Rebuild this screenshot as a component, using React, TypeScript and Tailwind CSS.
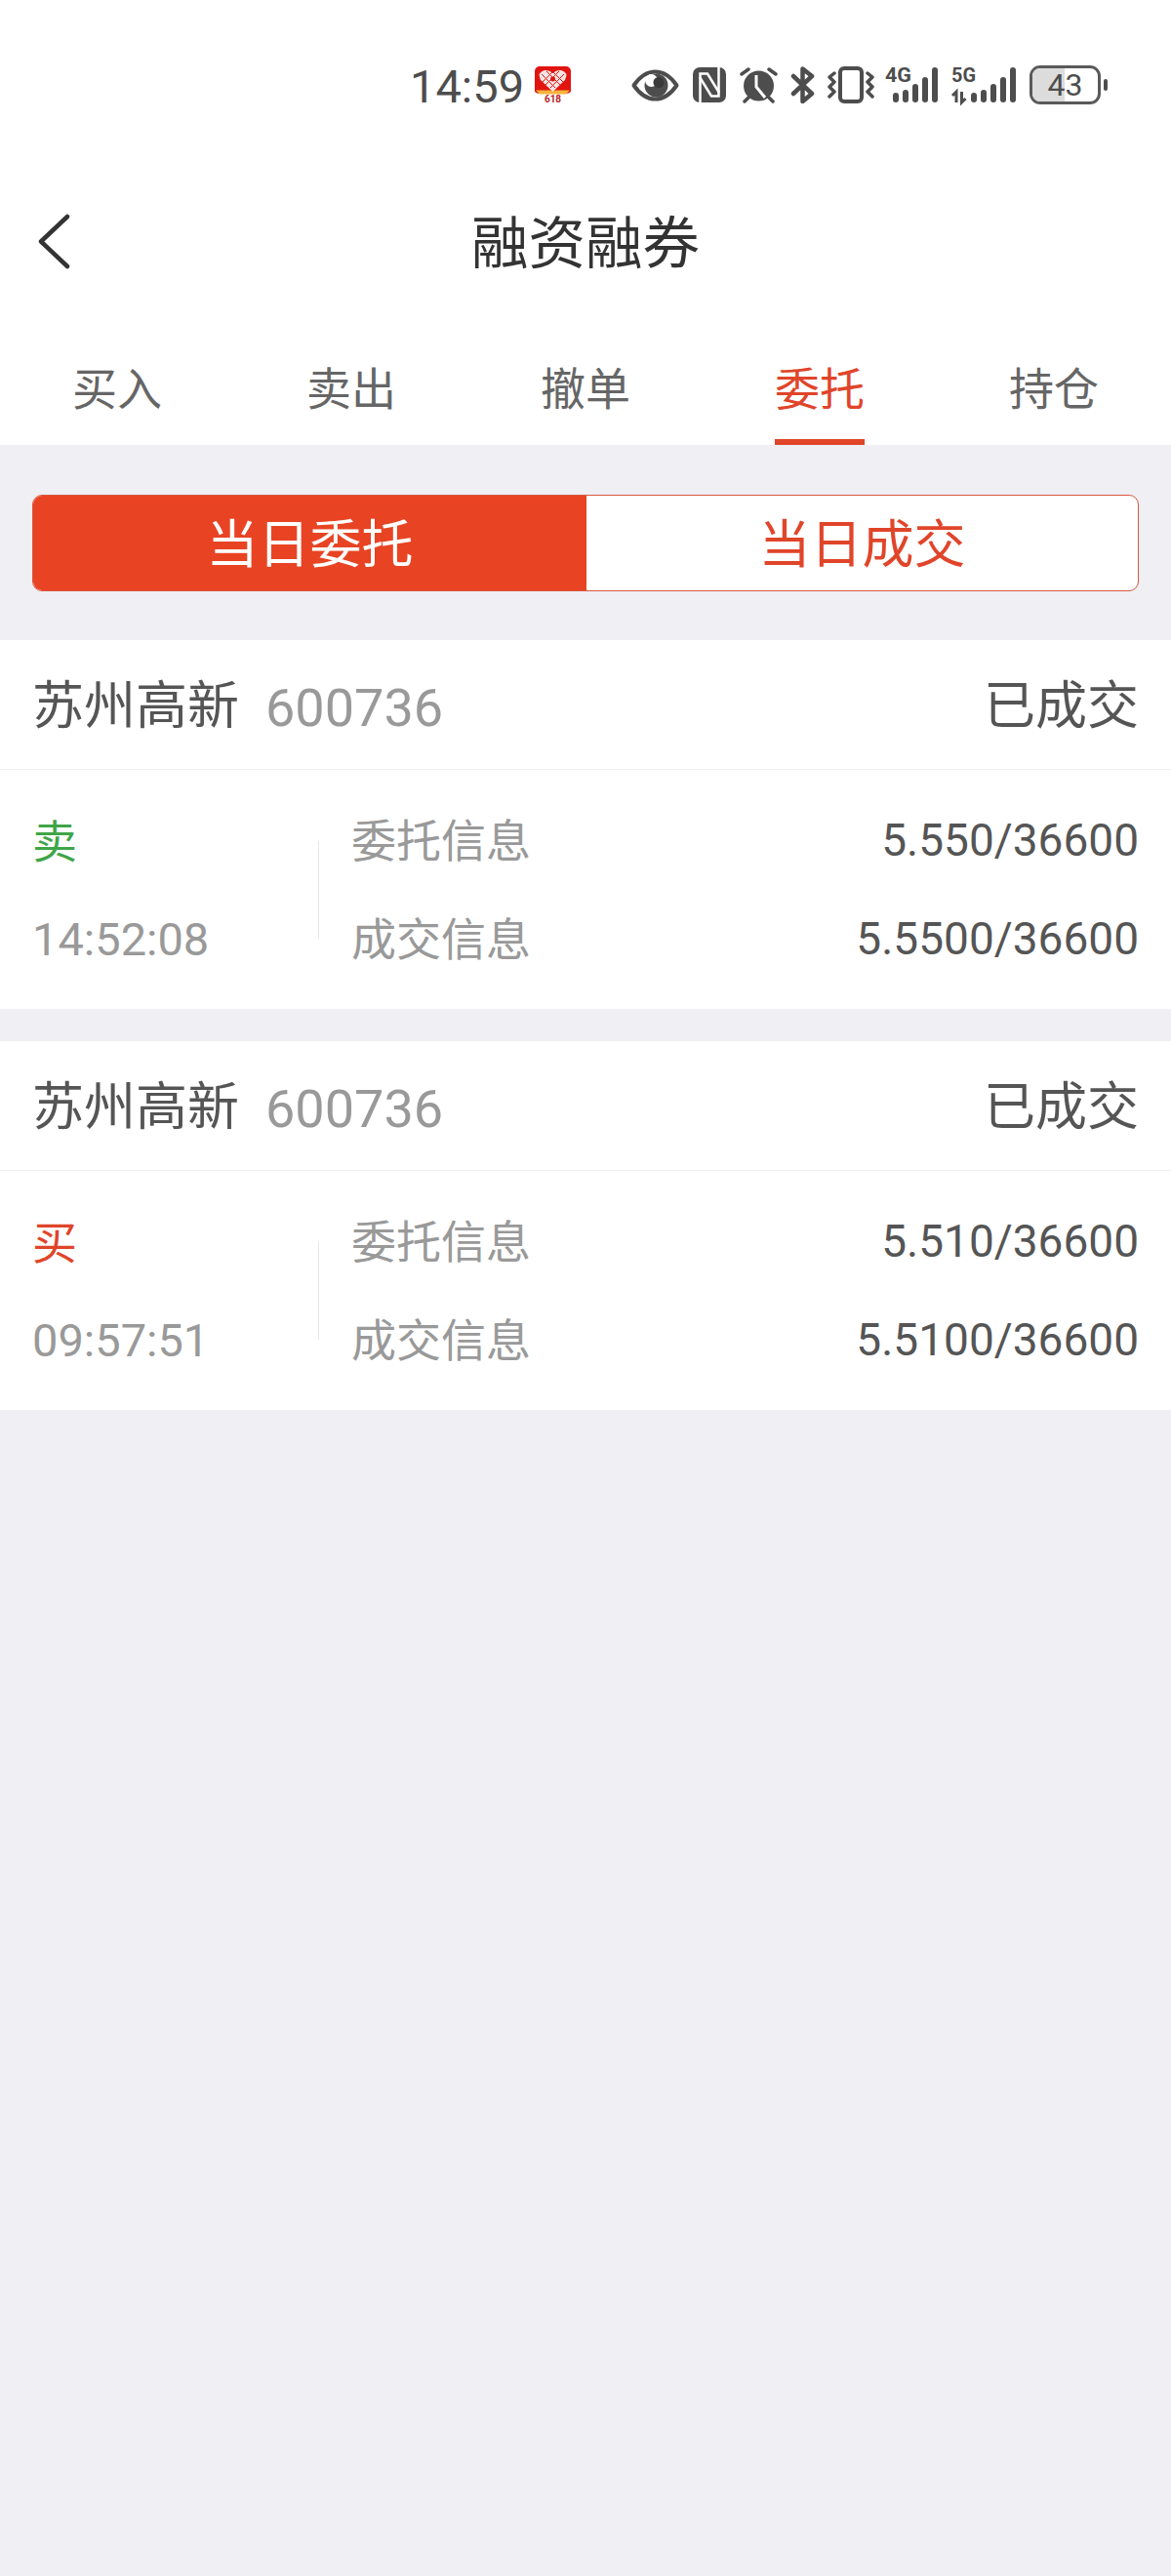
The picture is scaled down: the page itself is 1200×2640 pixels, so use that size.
const cjk = "font-['Noto_Sans_CJK_SC','Noto_Sans',sans-serif]";
const num = "font-['Roboto','Noto_Sans_CJK_SC',sans-serif]";

const tabs = ["买入", "卖出", "撤单", "委托", "持仓"];

const orders = [
  { side: "卖", sideClass: "text-[#3fa548]", time: "14:52:08", entrust: "5.550/36600", deal: "5.5500/36600" },
  { side: "买", sideClass: "text-[#e0452a]", time: "09:57:51", entrust: "5.510/36600", deal: "5.5100/36600" },
];

const AppBadge = () => (
  <svg width="39" height="42" viewBox="0 0 39 42" className="ml-[10px]">
    <path d="M6 2h27a5 5 0 0 1 5 5v21q-2 2-5 2H6q-3 0-5-2V7a5 5 0 0 1 5-5z" fill="#e1140f" />
    <path d="M2 26.500h35l-4 4H6z" fill="#f7b23c" />
    <path d="M19.500 28 L7 16 Q3 8 11 6 Q16 5.500 19.500 9 Q23 5.500 28 6 Q36 8 32 16 Z" fill="#f8e3e3" />
    <path d="M8 10l14 14M13 7l14 14M20 8l10 10M31 10L17 24M26 7L12 21M19 8L9 18" fill="none" stroke="#e1140f" strokeWidth="1" />
    <circle cx="19.500" cy="15" r="2.500" fill="#e1140f" />
    <text x="19.500" y="38.500" textAnchor="middle" fontSize="10" fontWeight="700" fill="#b5262c" fontFamily="Roboto">618</text>
  </svg>
);

const Eye = () => (
  <svg width="49" height="33" viewBox="0 0 49 33" className="ml-[61px]">
    <path d="M2.500 16.500C9 7 16 2.500 24.500 2.500S40 7 46.500 16.500C40 26 33 30.500 24.500 30.500S9 26 2.500 16.500z" fill="none" stroke="#4d4d4d" strokeWidth="4" strokeLinejoin="round" />
    <circle cx="25.500" cy="16.500" r="12" fill="#4d4d4d" />
    <circle cx="20.500" cy="11.500" r="6.500" fill="#fff" />
    <circle cx="28" cy="13.500" r="5.500" fill="#3a3a3a" />
  </svg>
);

const Nfc = () => (
  <svg width="34" height="36" viewBox="0 0 34 36" className="ml-[14px]">
    <rect x="0" y="0" width="34" height="36" rx="7" fill="#4d4d4d" />
    <path d="M7.500 36V6.500H15L27 26" fill="none" stroke="#fff" strokeWidth="2.500" />
    <path d="M26.500 0v29.500H19L7 10" fill="none" stroke="#fff" strokeWidth="2.500" />
  </svg>
);

const Alarm = () => (
  <svg width="39" height="38" viewBox="0 0 39 38" className="ml-[14px]">
    <circle cx="19.500" cy="20" r="15.500" fill="#4d4d4d" />
    <path d="M2 8l7-5M37 8l-7-5M9 32l-4 4M30 32l4 4" stroke="#4d4d4d" strokeWidth="3.500" strokeLinecap="round" />
    <path d="M17 9v12l9 11" fill="none" stroke="#fff" strokeWidth="3" />
  </svg>
);

const Bluetooth = () => (
  <svg width="25" height="38" viewBox="0 0 25 38" className="ml-[13px]">
    <path d="M3 10l19 18-9.500 8V2.500L22 10 3 28" fill="none" stroke="#4d4d4d" strokeWidth="4.500" strokeLinejoin="round" strokeLinecap="round" />
  </svg>
);

const Vibrate = () => (
  <svg width="48" height="38" viewBox="0 0 48 38" className="ml-[13px]">
    <rect x="13" y="2" width="22" height="34" rx="4" fill="none" stroke="#4d4d4d" strokeWidth="4" />
    <path d="M7 7L2 11l5 5-5 5 5 5-5 5" fill="none" stroke="#4d4d4d" strokeWidth="3.500" strokeLinejoin="round" strokeLinecap="round" />
    <path d="M41 7l5 4-5 5 5 5-5 5 5 5" fill="none" stroke="#4d4d4d" strokeWidth="3.500" strokeLinejoin="round" strokeLinecap="round" />
  </svg>
);

const barHeights = [10, 13, 19, 26, 36];

const Bars = ({ x }: { x: number }) => (
  <>
    {barHeights.map((height, i) => (
      <rect key={i} x={x + i * 10} y={37 - height} width="6" height={height} rx="3" fill="#4d4d4d" />
    ))}
  </>
);

// taller than the drawing so the 4G / 5G labels stay inside the svg box
const Signal4G = () => (
  <svg width="54" height="48" viewBox="0 -5 54 48" className="ml-[11px]">
    <text x="0" y="16" fontSize="21" fontWeight="700" fill="#4d4d4d" fontFamily="Roboto" textLength="27" lengthAdjust="spacingAndGlyphs">4G</text>
    <Bars x={8} />
  </svg>
);

const Signal5G = () => (
  <svg width="68" height="48" viewBox="0 -5 68 48" className="ml-[13px]">
    <text x="1" y="16" fontSize="21" fontWeight="700" fill="#4d4d4d" fontFamily="Roboto" textLength="25" lengthAdjust="spacingAndGlyphs">5G</text>
    <path d="M6 37V26L2 30M11.500 26v11l4-4" fill="none" stroke="#4d4d4d" strokeWidth="3" />
    <Bars x={21} />
  </svg>
);

const Battery = () => (
  <div className="ml-[13px] flex items-center">
    <div className="relative flex h-[40px] w-[73px] items-center justify-center overflow-hidden rounded-[11px] border-[3px] border-[#5a5a5a] bg-white">
      <div className="absolute left-0 top-0 h-full w-[33px] bg-[#dcdcdc]" />
      <span className={`relative text-[32px] leading-none text-[#4d4d4d] ${num}`}>43</span>
    </div>
    <div className="ml-[3px] h-[12px] w-[4px] rounded-full bg-[#4d4d4d]" />
  </div>
);

const StatusBar = () => (
  <div className="flex h-[178px] items-start bg-white pl-[420px] pt-[66px]">
    <span className={`w-[117px] text-[47px] leading-[46px] text-[#4d4d4d] ${num}`}>14:59</span>
    <div className="flex h-[42px] items-center">
      <AppBadge />
      <Eye />
      <Nfc />
      <Alarm />
      <Bluetooth />
      <Vibrate />
      <Signal4G />
      <Signal5G />
      <Battery />
    </div>
  </div>
);

const InfoRow = ({ label, value }: { label: string; value: string }) => (
  <div className="flex h-[55px] items-center justify-between">
    <span className="mb-[5px] text-[46px] leading-[55px] text-[#999999]">{label}</span>
    <span className={`text-[46px] leading-[55px] text-[#555555] ${num}`}>{value}</span>
  </div>
);

const Order = ({ order }: { order: (typeof orders)[number] }) => (
  <div className="bg-white">
    <div className="flex h-[133px] items-center justify-between border-b border-[#eeeeee] px-[33px]">
      <div className="flex items-center">
        <span className="mb-[4px] text-[53px] text-[#555555]">苏州高新</span>
        <span className={`ml-[27px] mt-[6px] text-[54px] text-[#999999] ${num}`}>600736</span>
      </div>
      <span className="mb-[4px] text-[53px] text-[#555555]">已成交</span>
    </div>
    <div className="flex h-[245px] items-center px-[33px]">
      <div className="flex w-[293px] flex-col gap-[46px]">
        <span className={`-mt-[2px] mb-[2px] text-[46px] leading-[55px] ${order.sideClass}`}>{order.side}</span>
        <span className={`text-[47px] leading-[55px] text-[#999999] ${num}`}>{order.time}</span>
      </div>
      <div className="h-[100px] w-px bg-[#e8e8e8]" />
      <div className="ml-[33px] flex flex-1 flex-col gap-[46px]">
        <InfoRow label="委托信息" value={order.entrust} />
        <InfoRow label="成交信息" value={order.deal} />
      </div>
    </div>
  </div>
);

export default function App() {
  return (
    <div className={`flex h-[2640px] w-[1200px] flex-col bg-[#efeff4] ${cjk}`}>
      <StatusBar />
      <div className="relative flex h-[138px] items-center justify-center bg-white">
        <svg width="33" height="58" viewBox="0 0 33 58" className="absolute left-[39px] top-[41px]">
          <path d="M30 3L3 28.500 30 54" fill="none" stroke="#333333" strokeWidth="4.500" strokeLinecap="round" strokeLinejoin="round" />
        </svg>
        <span className="mb-[4px] text-[58.500px] leading-none text-[#333333]">融资融券</span>
      </div>
      <div className="grid h-[140px] grid-cols-5 bg-white">
        {tabs.map((tab) => (
          <div key={tab} className="flex justify-center">
            <div
              className={`h-full border-b-[6px] pt-[50px] text-[46px] leading-[58px] ${
                tab === "委托" ? "border-[#e0452a] text-[#e0452a]" : "border-transparent text-[#666666]"
              }`}
            >
              {tab}
            </div>
          </div>
        ))}
      </div>
      <div className="mx-[33px] mt-[51px] flex h-[99px] overflow-hidden rounded-[10px] border border-[#d9583f] bg-white">
        <div className="flex w-[567px] items-center justify-center bg-[#e84424] pb-[4px] text-[53px] text-white">当日委托</div>
        <div className="flex flex-1 items-center justify-center pb-[4px] text-[53px] text-[#e0452a]">当日成交</div>
      </div>
      <div className="mt-[50px] flex flex-col gap-[33px]">
        {orders.map((order) => (
          <Order key={order.time} order={order} />
        ))}
      </div>
    </div>
  );
}
